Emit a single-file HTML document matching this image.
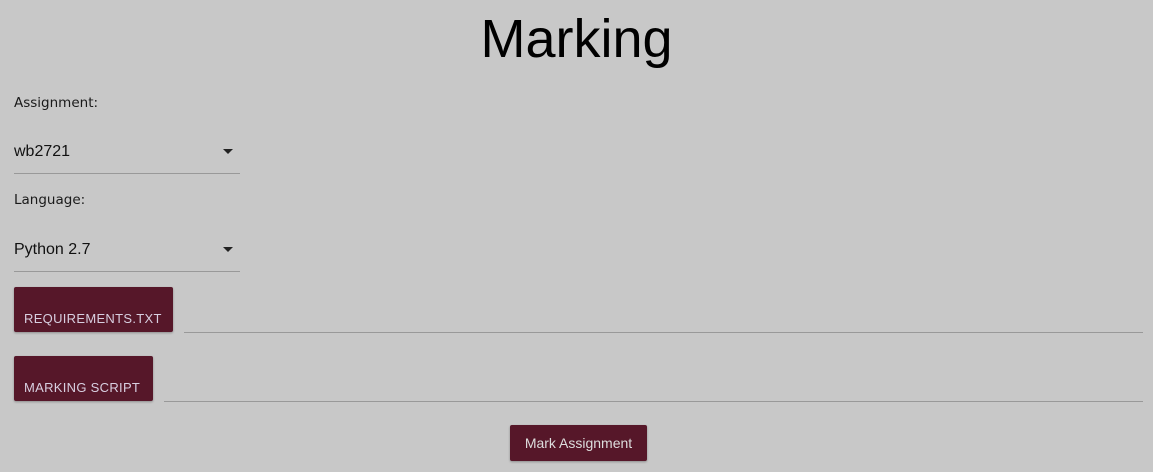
<!DOCTYPE html>
<html><head><style>
body{margin:0;width:1153px;height:472px;background:#c8c8c8;font-family:"Liberation Sans",sans-serif;position:relative;overflow:hidden;color:#111}
.a{position:absolute}
h1{position:absolute;left:0;width:1153px;top:8px;margin:0;text-align:center;font-weight:normal;font-size:54px;color:#000}
.lbl{font-size:13.5px;color:#1a1a1a;font-family:"DejaVu Sans",sans-serif}
.sel{font-size:16px;color:#111}
.ul{height:1px;background:#999}
.caret{width:0;height:0;border-left:5px solid transparent;border-right:5px solid transparent;border-top:5px solid #222}
.btn{background:#561729;border-radius:2px;color:#d8cfe0;font-size:13px;letter-spacing:.3px;box-shadow:0 1px 2px rgba(0,0,0,.3)}
.btn span{position:absolute;left:10px;bottom:6px}
</style></head><body>
<h1>Marking</h1>
<div class="a lbl" style="left:14px;top:95px">Assignment:</div>
<div class="a sel" style="left:14px;top:143px">wb2721</div>
<div class="a caret" style="left:223px;top:149px"></div>
<div class="a ul" style="left:14px;top:173px;width:226px"></div>
<div class="a lbl" style="left:14px;top:192px">Language:</div>
<div class="a sel" style="left:14px;top:241px">Python 2.7</div>
<div class="a caret" style="left:223px;top:247px"></div>
<div class="a ul" style="left:14px;top:271px;width:226px"></div>
<div class="a btn" style="left:14px;top:287px;width:159px;height:45px"><span>REQUIREMENTS.TXT</span></div>
<div class="a ul" style="left:184px;top:332px;width:959px"></div>
<div class="a btn" style="left:14px;top:356px;width:139px;height:45px"><span>MARKING SCRIPT</span></div>
<div class="a ul" style="left:164px;top:401px;width:979px"></div>
<div class="a btn" style="left:510px;top:425px;width:137px;height:36px;text-align:center;line-height:36px;font-size:14px;letter-spacing:0;color:#ddd">Mark Assignment</div>
</body></html>
